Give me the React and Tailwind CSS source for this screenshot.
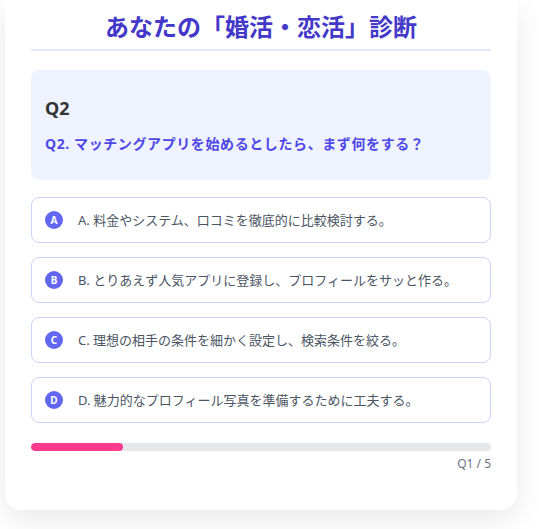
import React, { useState } from "react";

const options = [
  { key: "A", text: "A. 料金やシステム、口コミを徹底的に比較検討する。" },
  { key: "B", text: "B. とりあえず人気アプリに登録し、プロフィールをサッと作る。" },
  { key: "C", text: "C. 理想の相手の条件を細かく設定し、検索条件を絞る。" },
  { key: "D", text: "D. 魅力的なプロフィール写真を準備するために工夫する。" },
];

const App = () => {
  const [selected, setSelected] = useState(null);
  const current = 1;
  const total = 5;

  return (
    <div
      className="min-h-screen bg-white"
      style={{ fontFamily: '"Noto Sans", "Noto Sans CJK JP", sans-serif' }}
    >
      <div className="ml-[5px] w-[512px] bg-white rounded-b-2xl shadow-[0_10px_30px_rgba(0,0,0,0.09)] px-[26px] pt-[11px] pb-[38px]">
        <h1 className="text-[24px] leading-[32px] font-bold text-[#4338ca] text-center pb-[6px] border-b-2 border-[#e0e7ff]">
          あなたの「婚活・恋活」診断
        </h1>

        <div className="mt-[19px] bg-[#eef3ff] rounded-lg px-[14px] pt-[24px] pb-[26px]">
          <h2 className="text-[18px] leading-[28px] font-bold text-[#333]">Q2</h2>
          <p className="mt-[12px] text-[14px] leading-[20px] font-bold text-[#4f46e5] tracking-[0.6px]">
            Q2. マッチングアプリを始めるとしたら、まず何をする？
          </p>
        </div>

        <div className="mt-[17px] flex flex-col gap-[14px]">
          {options.map((o) => (
            <button
              key={o.key}
              onClick={() => setSelected(o.key)}
              className={
                "h-[46px] w-full flex items-center gap-[15px] pl-[13px] pr-4 rounded-lg border bg-white text-left " +
                (selected === o.key ? "border-[#6366f1]" : "border-[#c7d2fe]")
              }
            >
              <span className="w-[18px] h-[18px] rounded-full bg-[#6366f1] text-white text-[10px] font-bold flex items-center justify-center shrink-0">
                {o.key}
              </span>
              <span className="text-[13px] leading-[20px] text-[#4b5563]">{o.text}</span>
            </button>
          ))}
        </div>

        <div className="mt-[20px] h-[8px] w-full rounded-full bg-[#e5e7eb] overflow-hidden">
          <div
            className="h-full rounded-full bg-[#ff3b8d]"
            style={{ width: `${(current / total) * 100}%` }}
          />
        </div>
        <div className="mt-[5px] text-right text-[12px] leading-[16px] text-[#6b7280]">
          Q{current} / {total}
        </div>
      </div>
    </div>
  );
};

export default App;
